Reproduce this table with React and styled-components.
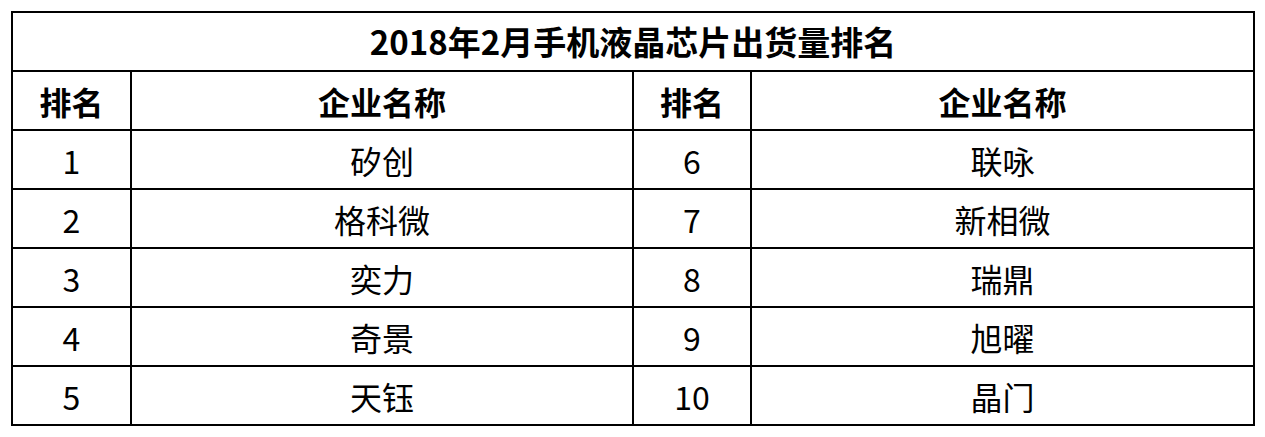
import React from 'react';
import styled, { createGlobalStyle } from 'styled-components';

const GlobalStyle = createGlobalStyle`
  html, body { margin: 0; padding: 0; background: #fff; }
  body { font-family: "Noto Sans CJK SC", "Noto Sans", sans-serif; color: #000; }
`;

const Page = styled.div`
  padding: 11px 0 0 11px;
`;

const Table = styled.table`
  border-collapse: collapse;
  table-layout: fixed;
  width: 1242px;
  border: 2px solid #000;
`;

const Col = styled.col`
  width: ${p => p.$w}px;
`;

const TitleCell = styled.th`
  height: 57px;
  border: 2px solid #000;
  font-size: 33px;
  font-weight: 700;
  line-height: 1;
  text-align: center;
  vertical-align: middle;
  padding: 0;
`;

const HeadCell = styled.th`
  height: 57px;
  border: 2px solid #000;
  font-size: 32px;
  font-weight: 700;
  line-height: 1;
  text-align: center;
  vertical-align: middle;
  padding: 0;
`;

const Cell = styled.td`
  height: 57px;
  border: 2px solid #000;
  font-size: 32px;
  font-weight: 400;
  line-height: 1;
  text-align: center;
  vertical-align: middle;
  padding: 0;
`;

const left = ['矽创', '格科微', '奕力', '奇景', '天钰'];
const right = ['联咏', '新相微', '瑞鼎', '旭曜', '晶门'];

export default function App() {
  return (
    <Page>
      <GlobalStyle />
      <Table>
        <colgroup>
          <Col $w={119} />
          <Col $w={502} />
          <Col $w={118} />
          <Col $w={503} />
        </colgroup>
        <thead>
          <tr>
            <TitleCell colSpan={4}>2018年2月手机液晶芯片出货量排名</TitleCell>
          </tr>
          <tr>
            <HeadCell>排名</HeadCell>
            <HeadCell>企业名称</HeadCell>
            <HeadCell>排名</HeadCell>
            <HeadCell>企业名称</HeadCell>
          </tr>
        </thead>
        <tbody>
          {left.map((name, i) => (
            <tr key={i}>
              <Cell>{i + 1}</Cell>
              <Cell>{name}</Cell>
              <Cell>{i + 6}</Cell>
              <Cell>{right[i]}</Cell>
            </tr>
          ))}
        </tbody>
      </Table>
    </Page>
  );
}
